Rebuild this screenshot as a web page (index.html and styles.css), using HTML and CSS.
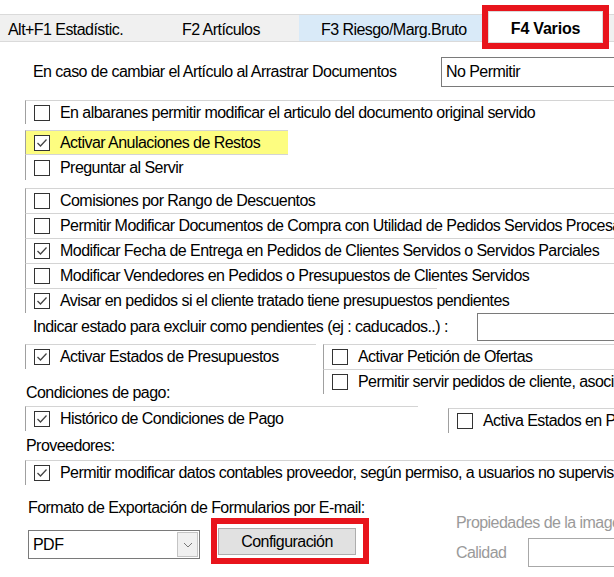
FILE: index.html
```html
<!DOCTYPE html>
<html lang="es">
  <head>
    <meta charset="UTF-8" />
    <title>F4 Varios</title>
    <link rel="stylesheet" href="styles.css">
  </head>
  <body>
    <!-- pestañas -->
    <div class="tabs">
      <div class="tab t1">Alt+F1 Estadístic.</div>
      <div class="tab t2">F2 Artículos</div>
      <div class="tab t3">F3 Riesgo/Marg.Bruto</div>
      <div class="tab t4">F4 Varios</div>
    </div>

    <div class="row1">
      <span class="lbl">En caso de cambiar el Artículo al Arrastrar Documentos</span>
      <div class="field wide">No Permitir</div>
    </div>

    <div class="panel g1"><span class="box"></span>En albaranes permitir modificar el articulo del documento original servido</div>

    <div class="panel hl"><span class="box on"><svg viewBox="0 0 14 14"><polyline points="2.5,7 5.5,10 11.5,3.5" /></svg></span>Activar Anulaciones de Restos</div>
    <div class="panel preg"><span class="box"></span>Preguntar al Servir</div>

    <div class="panel g3"><span class="box"></span>Comisiones por Rango de Descuentos</div>
    <div class="panel"><span class="box"></span>Permitir Modificar Documentos de Compra con Utilidad de Pedidos Servidos Procesados</div>
    <div class="panel"><span class="box on"><svg viewBox="0 0 14 14"><polyline points="2.5,7 5.5,10 11.5,3.5" /></svg></span>Modificar Fecha de Entrega en Pedidos de Clientes Servidos o Servidos Parciales</div>
    <div class="panel"><span class="box"></span>Modificar Vendedores en Pedidos o Presupuestos de Clientes Servidos</div>
    <div class="panel avisar"><span class="box on"><svg viewBox="0 0 14 14"><polyline points="2.5,7 5.5,10 11.5,3.5" /></svg></span>Avisar en pedidos si el cliente tratado tiene presupuestos pendientes</div>

    <div class="row2">
      <span class="lbl">Indicar estado para excluir como pendientes (ej : caducados..) :</span>
      <div class="field wide"></div>
    </div>

    <div class="split">
      <div class="col">
        <div class="panel est"><span class="box on"><svg viewBox="0 0 14 14"><polyline points="2.5,7 5.5,10 11.5,3.5" /></svg></span>Activar Estados de Presupuestos</div>
        <div class="cap cond">Condiciones de pago:</div>
      </div>
      <div class="col">
        <div class="panel"><span class="box"></span>Activar Petición de Ofertas</div>
        <div class="panel"><span class="box"></span>Permitir servir pedidos de cliente, asociados a pedidos de proveedor</div>
      </div>
    </div>

    <div class="split2">
      <div class="panel hist"><span class="box on"><svg viewBox="0 0 14 14"><polyline points="2.5,7 5.5,10 11.5,3.5" /></svg></span>Histórico de Condiciones de Pago</div>
      <div class="panel activa"><span class="box"></span>Activa Estados en Pedidos</div>
    </div>

    <div class="cap prov">Proveedores:</div>
    <div class="panel provp"><span class="box on"><svg viewBox="0 0 14 14"><polyline points="2.5,7 5.5,10 11.5,3.5" /></svg></span>Permitir modificar datos contables proveedor, según permiso, a usuarios no supervisores</div>

    <div class="cap fmt">Formato de Exportación de Formularios por E-mail:</div>
    <div class="bottom">
      <div class="combo">
        <span>PDF</span>
        <span class="drop"><svg viewBox="0 0 10 6"><polyline points="1,1 5,5 9,1" /></svg></span>
      </div>
      <div class="redbox">
        <div class="btn">Configuración</div>
      </div>
      <div class="img">
        <div class="dis">Propiedades de la imagen</div>
        <div class="cal">
          <span class="dis">Calidad</span>
          <div class="field small"></div>
        </div>
      </div>
    </div>
  </body>
</html>
```

FILE: styles.css
```css
* {
  margin: 0;
  padding: 0;
  box-sizing: border-box;
}
html,
body {
  overflow: hidden;
}
body {
  width: 614px;
  height: 577px;
  background: #fff;
  color: #000;
  font-family: "Liberation Sans", Arial, sans-serif;
  font-size: 16px;
  letter-spacing: -0.55px;
  white-space: nowrap;
}

/* pestañas */
.tabs {
  margin-top: 14px;
  height: 28px;
  display: flex;
  background: #f0f0f0;
  border-top: 1px solid #dadada;
  border-bottom: 1px solid #dadada;
}
.tab {
  display: flex;
  align-items: center;
  flex-shrink: 0;
  padding-top: 3px;
}
.t1 {
  width: 164px;
  padding-left: 8px;
}
.t2 {
  width: 135px;
  padding-left: 18px;
}
.t3 {
  width: 183px;
  padding-left: 22px;
  background: #d9eaf8;
}
.t4 {
  width: 127px;
  margin: -10px 0 -8px;
  padding-top: 4px;
  justify-content: center;
  font-weight: bold;
  letter-spacing: -0.2px;
  background: #fff;
  border: 6px solid #e8141c;
  box-shadow: inset 0 0 0 1px #dadada;
}

/* campos */
.field {
  border: 1px solid #7a7a7a;
  background: #fff;
  display: flex;
  align-items: center;
  padding-left: 4px;
  flex-shrink: 0;
}
.wide {
  width: 200px;
}
.row1 {
  margin-top: 15px;
  height: 30px;
  display: flex;
}
.row1 .lbl {
  width: 441px;
  flex-shrink: 0;
  padding-left: 33px;
  align-self: center;
}
.row2 {
  height: 28px;
  display: flex;
}
.row2 .lbl {
  width: 477px;
  flex-shrink: 0;
  padding-left: 33px;
  align-self: center;
}

/* paneles con casilla */
.panel {
  height: 25px;
  margin-left: 25px;
  padding-left: 8px;
  display: flex;
  align-items: center;
  border-top: 1px solid #d4d4d4;
  border-left: 1px solid #a0a0a0;
}
.box {
  width: 16px;
  height: 16px;
  margin-right: 10px;
  flex-shrink: 0;
  border: 1px solid #333;
  background: #fff;
}
.box svg {
  display: block;
  width: 14px;
  height: 14px;
  fill: none;
  stroke: #444;
  stroke-width: 1.3;
}
.g1 {
  margin-top: 13px;
  height: 24px;
}
.hl {
  margin-top: 6px;
  width: 263px;
  height: 24px;
  background: #fdfd80;
}
.preg {
  width: 263px;
  height: 26px;
}
.g3 {
  margin-top: 8px;
}
.avisar {
  width: 412px;
}

.split {
  margin: 3px 0 0 25px;
  height: 58px;
  display: grid;
  grid-template-columns: 298px 1fr;
}
.split .panel {
  margin-left: 0;
}
.est {
  width: 291px;
}
.cap {
  height: 18px;
  line-height: 18px;
  padding-left: 26px;
}
.split .cap {
  padding-left: 1px;
}
.cond {
  margin-top: 15px;
}
.split2 {
  margin-top: 4px;
  height: 29px;
  display: flex;
  align-items: flex-start;
}
.hist {
  width: 393px;
  flex-shrink: 0;
}
.activa {
  margin: 2px 0 0 30px;
  width: 200px;
  flex-shrink: 0;
}
.prov {
  margin-top: 2px;
}
.provp {
  margin-top: 5px;
}
.fmt {
  margin-top: 14px;
  padding-left: 28px;
}

/* fila inferior */
.bottom {
  margin-top: 1px;
  display: flex;
  align-items: flex-start;
}
.bottom > div {
  flex-shrink: 0;
}
.combo {
  margin: 12px 0 0 28px;
  width: 172px;
  height: 29px;
  padding: 0 1px 0 4px;
  display: flex;
  align-items: center;
  justify-content: space-between;
  border: 1px solid #7a7a7a;
}
.drop {
  width: 21px;
  height: 25px;
  display: flex;
  align-items: center;
  justify-content: center;
  background: #f0f0f0;
  border: 1px solid #c4c4c4;
}
.drop svg {
  width: 10px;
  height: 6px;
  fill: none;
  stroke: #777;
  stroke-width: 1;
}
.redbox {
  margin-left: 11px;
  width: 158px;
  height: 46px;
  padding: 4px 0 0 1px;
  border: 6px solid #e8141c;
}
.btn {
  width: 138px;
  height: 27px;
  display: flex;
  align-items: center;
  justify-content: center;
  background: #e1e1e1;
  border: 1px solid #adadad;
}
.img {
  margin: -4px 0 0 87px;
}
.dis {
  color: #9a9a9a;
  height: 18px;
  line-height: 18px;
}
.cal {
  margin-top: 6px;
  display: flex;
  align-items: center;
}
.cal .dis {
  width: 72px;
}
.small {
  width: 120px;
  height: 29px;
  border-color: #a8a8a8;
}
```
